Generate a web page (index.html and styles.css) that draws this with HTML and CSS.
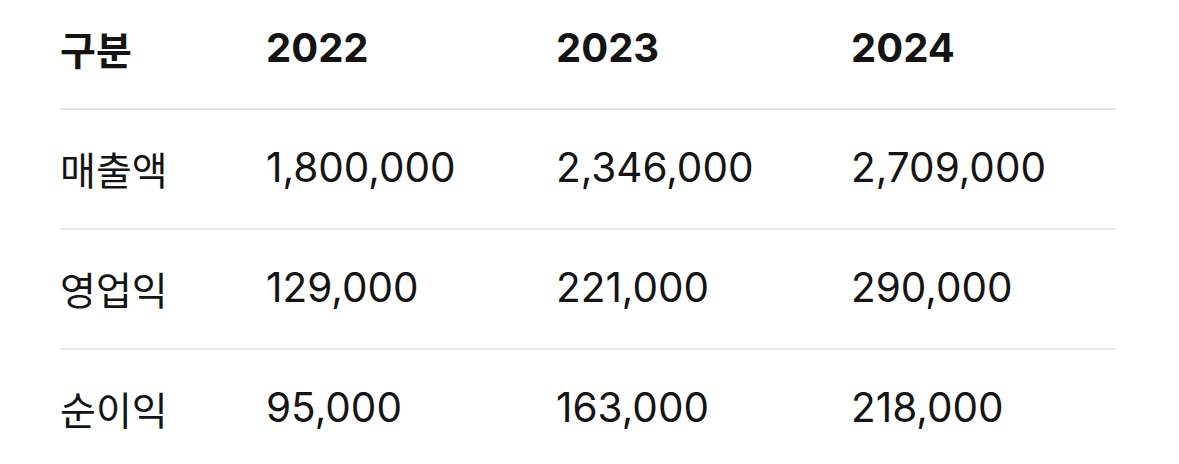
FILE: index.html
```html
<!DOCTYPE html>
<html lang="ko">
<head>
<meta charset="utf-8">
<link rel="stylesheet" href="styles.css">
</head>
<body>
<div class="wrap">
  <table class="fin">
    <colgroup>
      <col class="c1"><col class="c2"><col class="c3"><col class="c4">
    </colgroup>
    <thead>
      <tr><th class="lbl">구분</th><th class="num">2022</th><th class="num">2023</th><th class="num">2024</th></tr>
    </thead>
    <tbody>
      <tr><td class="lbl">매출액</td><td class="num">1,800,000</td><td class="num">2,346,000</td><td class="num">2,709,000</td></tr>
      <tr><td class="lbl">영업익</td><td class="num">129,000</td><td class="num">221,000</td><td class="num">290,000</td></tr>
      <tr><td class="lbl">순이익</td><td class="num">95,000</td><td class="num">163,000</td><td class="num">218,000</td></tr>
    </tbody>
  </table>
</div>
</body>
</html>
```
FILE: styles.css
```css
html, body {
  margin: 0;
  padding: 0;
  background: #ffffff;
}
.wrap {
  padding: 0 63px 0 60px;
}
.fin {
  width: 100%;
  border-collapse: collapse;
  table-layout: fixed;
  color: #141414;
}
.c1 { width: 206px; }
.c2 { width: 290px; }
.c3 { width: 295px; }
.fin th, .fin td {
  text-align: left;
  white-space: nowrap;
  line-height: 48px;
  vertical-align: middle;
}
.lbl {
  font-family: "Noto Sans CJK KR", sans-serif;
  font-size: 39px;
}
.num {
  font-family: Inter, "Noto Sans CJK KR", sans-serif;
  font-size: 41px;
}
.fin th {
  font-weight: 700;
  padding: 24px 0 36px;
  border-bottom: 2px solid #e2e2e2;
}
.fin th.num {
  font-size: 40px;
}
.fin td {
  font-weight: 400;
  padding: 34px 0 36px;
  border-bottom: 2px solid #e9e9e9;
}
.fin td.num {
  font-size: 40.5px;
}
.fin tbody tr:last-child td {
  border-bottom: none;
}
```
